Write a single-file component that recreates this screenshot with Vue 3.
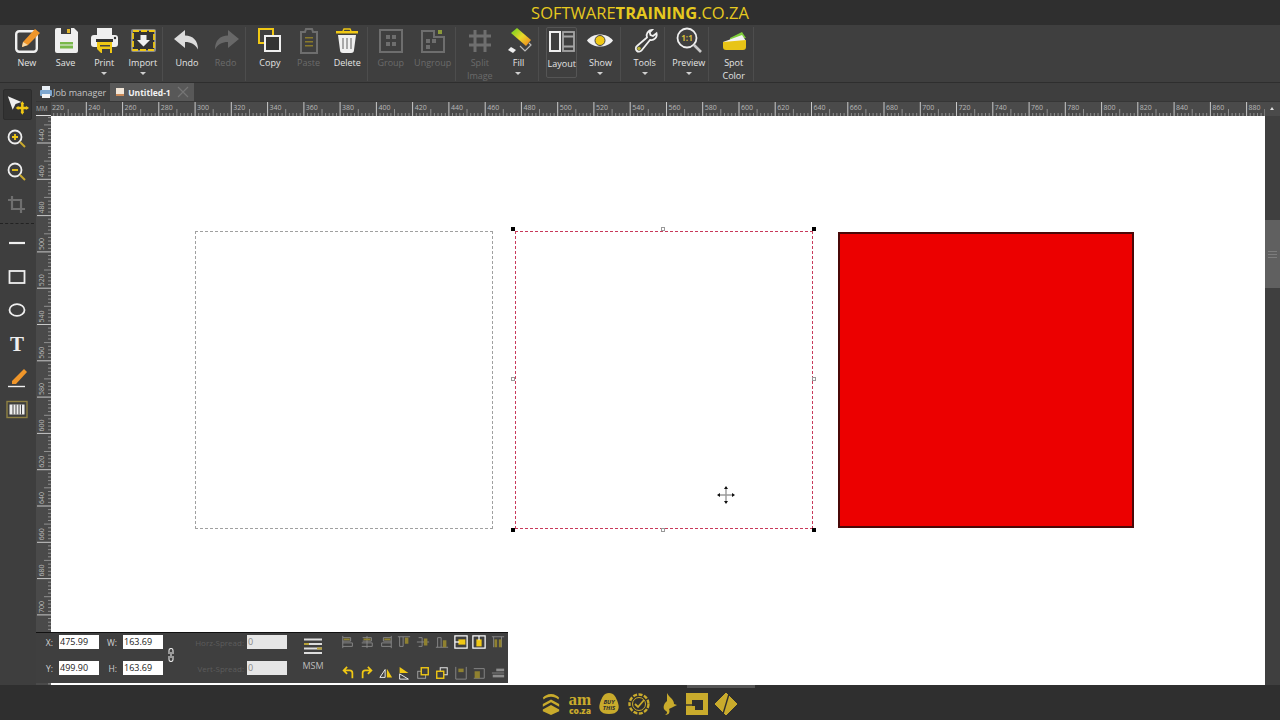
<script setup>
import { computed } from 'vue'

const Y = '#f0c814'
const W = '#efefef'
const D = '#6e6e6e'

const icons = {
  new: `<rect x="5.200" y="4.200" width="20.600" height="20.600" rx="3" fill="none" stroke="${W}" stroke-width="2.400"/><path d="M11 20l1-5L24 2l5 4-12 12z" fill="#f0962a"/><path d="M11 20l1-5 5 3z" fill="#f7d9a8"/>`,
  save: `<path d="M5 3a2 2 0 0 1 2-2h17l4 4v19a2 2 0 0 1-2 2H7a2 2 0 0 1-2-2z" fill="${W}"/><rect x="11" y="1" width="10" height="6" fill="#3d3d3d"/><rect x="17" y="2" width="3" height="4" fill="#e0b52a"/><rect x="10" y="15" width="13" height="2.500" fill="#79b84a"/><rect x="10" y="18.500" width="13" height="3" fill="#79b84a"/>`,
  print: `<rect x="9" y="1" width="15" height="7" fill="${W}"/><rect x="3" y="8" width="27" height="12" rx="3" fill="${W}"/><circle cx="27" cy="11" r="1.200" fill="#333"/><rect x="8" y="12" width="17" height="3" fill="#333"/><path d="M9 15h15v11H13l-4-4z" fill="${Y}"/><rect x="12" y="18" width="10" height="1.500" fill="#444"/><rect x="14" y="22" width="8" height="4" fill="#3d3d3d"/>`,
  import: `<rect x="4" y="2" width="25" height="23" rx="2" fill="#8b8b8b"/><rect x="6" y="4" width="21" height="19" fill="#333" stroke="${Y}" stroke-width="1.800" stroke-dasharray="6 2"/><path d="M13.500 8h6v5h3.500l-6.500 6.500L10 13h3.500z" fill="${W}"/>`,
  undo: `<path d="M3 12L14 3v5.500c8 0 13 5 13 14-3-5.500-7-7.500-13-7.500V21z" fill="#dcdcdc"/>`,
  redo: `<path d="M29 12L18 3v5.500c-8 0-13 5-13 14 3-5.500 7-7.500 13-7.500V21z" fill="#686868"/>`,
  copy: `<rect x="5" y="2" width="14" height="14" fill="none" stroke="${Y}" stroke-width="2"/><rect x="11" y="9" width="15" height="15" fill="#333" stroke="${W}" stroke-width="2"/>`,
  paste: `<path d="M8 5h4l1-3h6l1 3h4v21H8z" fill="none" stroke="${D}" stroke-width="2"/><rect x="12" y="10" width="8" height="1.500" fill="#8a7a2a"/><rect x="12" y="14" width="8" height="1.500" fill="#8a7a2a"/><rect x="12" y="18" width="8" height="1.500" fill="#8a7a2a"/>`,
  delete: `<rect x="5" y="4" width="22" height="2.500" fill="${Y}"/><path d="M12 4l1-2h6l1 2" fill="none" stroke="${Y}" stroke-width="1.500"/><path d="M7 8h18l-2 15a3 3 0 0 1-3 3h-8a3 3 0 0 1-3-3z" fill="${W}"/><path d="M12 11v11M16 11v11M20 11v11" stroke="#777" stroke-width="1.200"/>`,
  group: `<rect x="5" y="3" width="22" height="22" fill="none" stroke="${D}" stroke-width="2"/><rect x="11" y="8" width="4" height="4" fill="${D}"/><rect x="17" y="8" width="4" height="4" fill="${D}"/><rect x="11" y="15" width="4" height="4" fill="${D}"/><rect x="17" y="15" width="4" height="4" fill="${D}"/>`,
  ungroup: `<path d="M5 4h12v6h10v15H5z" fill="none" stroke="${D}" stroke-width="2"/><rect x="9" y="12" width="4" height="4" fill="${D}"/><rect x="15" y="12" width="4" height="4" fill="${D}"/><rect x="9" y="18" width="4" height="4" fill="${D}"/><rect x="21" y="3" width="4" height="4" fill="#8c9a3a"/>`,
  split: `<path d="M11 3v22M21 3v22M5 9h22M5 18h22" stroke="${D}" stroke-width="3"/>`,
  fill: `<defs><linearGradient id="rg" x1="0" y1="0" x2="1" y2="1"><stop offset=".1" stop-color="#7ed321"/><stop offset=".5" stop-color="#e8d82a"/><stop offset="1" stop-color="#f0801e"/></linearGradient></defs><path d="M9 6l6-5 14 12-5 6z" fill="url(#rg)"/><path d="M27 16l2 2-6 6-5-5" fill="none" stroke="#bbb" stroke-width="1.200"/><path d="M9 20l5 3-3 3-5-3z" fill="${W}"/>`,
  layout: `<rect x="4" y="4" width="10" height="19" fill="none" stroke="${W}" stroke-width="2"/><rect x="17" y="4" width="11" height="19" fill="none" stroke="#a5a5a5" stroke-width="1.800"/><path d="M17 8.500h11M17 18.500h11" stroke="#a5a5a5" stroke-width="1.800"/>`,
  show: `<path d="M3 13.500C9 5.500 23 5.500 29 13.500 23 21.500 9 21.500 3 13.500z" fill="${W}"/><circle cx="16" cy="13.500" r="5" fill="${Y}" stroke="#444"/>`,
  tools: `<path d="M23 3a5.500 5.500 0 0 0-5 7.500L8 19a3.200 3.200 0 1 0 4.500 4.500L21 13a5.500 5.500 0 0 0 6.500-6.800l-3.500 2.800-2.500-1-.8-2.500z" fill="none" stroke="${W}" stroke-width="1.800"/><circle cx="10" cy="21.500" r="1.800" fill="#b9b23a"/>`,
  preview: `<circle cx="14" cy="11" r="9.500" fill="none" stroke="${W}" stroke-width="1.800"/><path d="M21 18l7 7" stroke="#c9c9c9" stroke-width="2.600"/><text x="14" y="14" font-size="8" font-weight="700" text-anchor="middle" font-family="Open Sans, sans-serif" fill="#d8be3a">1:1</text>`,
  spot: `<path d="M12 11l12-6 4 6-16 2z" fill="#7ecf3a"/><path d="M5 15L24 8l4 6-23 2z" fill="#f2f2f2"/><path d="M5 15l23-2v7a3 3 0 0 1-3 3H8a3 3 0 0 1-3-3z" fill="#e8c417"/>`
}

const groups = [
  { pad: 0, tools: [
    { label: 'New', icon: 'new' }, { label: 'Save', icon: 'save' },
    { label: 'Print', icon: 'print', menu: true }, { label: 'Import', icon: 'import', menu: true }] },
  { pad: 4.3, tools: [{ label: 'Undo', icon: 'undo' }, { label: 'Redo', icon: 'redo', off: true }] },
  { pad: 4.6, tools: [
    { label: 'Copy', icon: 'copy' }, { label: 'Paste', icon: 'paste', off: true }, { label: 'Delete', icon: 'delete' }] },
  { pad: 3.9, tools: [{ label: 'Group', icon: 'group', off: true }, { label: 'Ungroup', icon: 'ungroup', off: true, wide: true }] },
  { pad: 4.3, tools: [{ label: 'Split', second: 'Image', icon: 'split', off: true }, { label: 'Fill', icon: 'fill', menu: true }] },
  { pad: 3.6, tools: [{ label: 'Layout', icon: 'layout', on: true }, { label: 'Show', icon: 'show', menu: true }] },
  { pad: 4.6, tools: [{ label: 'Tools', icon: 'tools', menu: true }] },
  { pad: 4.3, tools: [{ label: 'Preview', icon: 'preview', menu: true }] },
  { pad: 5.3, tools: [{ label: 'Spot', second: 'Color', icon: 'spot' }] }
]

const sideTools = [
  { svg: `<circle cx="10" cy="11" r="6.500" fill="none" stroke="${W}" stroke-width="1.800"/><path d="M7 11h6M10 8v6" stroke="${Y}" stroke-width="1.800"/><path d="M15 16l5 5" stroke="#c9a92e" stroke-width="2"/>` },
  { svg: `<circle cx="10" cy="11" r="6.500" fill="none" stroke="${W}" stroke-width="1.800"/><path d="M7 11h6" stroke="${Y}" stroke-width="1.800"/><path d="M15 16l5 5" stroke="#c9a92e" stroke-width="2"/>` },
  { svg: `<path d="M7 4v13h13M3 8h13v13" fill="none" stroke="#6f6f6f" stroke-width="2.200"/>`, sepAfter: true },
  { svg: `<path d="M4 12h16" stroke="${W}" stroke-width="2.200"/>` },
  { svg: `<rect x="4.500" y="6" width="15" height="12" fill="none" stroke="${W}" stroke-width="1.800"/>` },
  { svg: `<ellipse cx="12" cy="12" rx="7.500" ry="5.800" fill="none" stroke="${W}" stroke-width="1.800"/>` },
  { svg: `<text x="12" y="19" font-size="21" font-weight="700" text-anchor="middle" font-family="Liberation Serif, serif" fill="${W}">T</text>` },
  { svg: `<path d="M7 16L19 4l3 3L11 19H7z" fill="#f0962a"/><path d="M3 21.500h17" stroke="${W}" stroke-width="1.400"/>` },
  { svg: `<rect x="2" y="3.500" width="20" height="16" fill="none" stroke="#8f8143" stroke-width="1.400"/><rect x="4.500" y="6.500" width="15" height="10" fill="${W}"/><path d="M8 6.500v10M11 6.500v10M14 6.500v10M16.500 6.500v10" stroke="#444" stroke-width="1"/>` }
]

const hPos = v => 86.3 + ((v - 240) / 20) * 36.26 - 51
const vPos = v => 27 + ((v - 440) / 20) * 36.3 // y inside the ruler, which starts at y=116

const hLabels = computed(() => {
  const list = []
  for (let v = 220; v <= 880; v += 20) list.push({ v, x: hPos(v) })
  return list
})
const vLabels = computed(() => {
  const list = []
  for (let v = 440; v <= 700; v += 20) list.push({ v, y: vPos(v) })
  return list
})

function ticks(horizontal, major) {
  let d = ''
  for (let v = 200; v <= 900; v += 2) {
    const isMajor = v % 20 === 0
    if (isMajor !== major) continue
    const size = isMajor ? 14 : v % 10 === 0 ? 7 : 3
    if (horizontal) {
      d += `M${hPos(v).toFixed(1)} 14v-${size}`
    } else {
      d += `M15 ${vPos(v).toFixed(1)}h-${size}`
    }
  }
  return d
}
const hMajor = computed(() => ticks(true, true))
const hMinor = computed(() => ticks(true, false))
const vMajor = computed(() => ticks(false, true))
const vMinor = computed(() => ticks(false, false))

const handles = [
  { cls: 'solid', x: -5, y: -5 }, { cls: 'solid', x: 296, y: -5 }, { cls: 'solid', x: -5, y: 296 }, { cls: 'solid', x: 296, y: 296 },
  { cls: 'hollow', x: 145, y: -5 }, { cls: 'hollow', x: -5, y: 145 }, { cls: 'hollow', x: 296, y: 145 }, { cls: 'hollow', x: 145, y: 296 }
]

const A = '#8d8d8d'
const B = '#8f8130'
const alignTop = [
  `<path d="M2 1v14M2 3h9v4H2M2 9h11v4H2" fill="none" stroke="${A}"/><rect x="3" y="4" width="7" height="2" fill="${B}"/>`,
  `<path d="M8 1v14M3 3h10v4H3M2 9h12v4H2" fill="none" stroke="${A}"/><rect x="4" y="4" width="8" height="2" fill="${B}"/>`,
  `<path d="M14 1v14M14 3H5v4h9M14 9H3v4h11" fill="none" stroke="${A}"/><rect x="6" y="4" width="7" height="2" fill="${B}"/>`,
  `<path d="M1 2h14M3 2v11h4V2" fill="none" stroke="${A}"/><rect x="9" y="3" width="4" height="7" fill="${B}"/>`,
  `<path d="M1 8h14M3 3h4v10H3" fill="none" stroke="${A}"/><rect x="9" y="4" width="4" height="8" fill="${B}"/>`,
  `<path d="M1 14h14M3 14V3h4v11" fill="none" stroke="${A}"/><rect x="9" y="6" width="4" height="8" fill="${B}"/>`,
  `<rect x="1" y="1" width="14" height="14" fill="none" stroke="#fff" stroke-width="1.400"/><rect x="5" y="5" width="8" height="6" fill="${Y}"/><path d="M1 8h5" stroke="#fff" stroke-width="1.400"/>`,
  `<rect x="1" y="1" width="14" height="14" fill="none" stroke="#fff" stroke-width="1.400"/><rect x="5" y="5" width="6" height="8" fill="${Y}"/><path d="M8 1v5" stroke="#fff" stroke-width="1.400"/>`,
  `<path d="M3 2v12M12 2v12M1 2h14" fill="none" stroke="${A}"/><rect x="4" y="5" width="3" height="9" fill="${B}"/><rect x="9" y="5" width="3" height="9" fill="${B}"/>`
]
const alignBottom = [
  `<path d="M13 14V8a3 3 0 0 0-3-3H4M7 1L3 5l4 4" fill="none" stroke="${Y}" stroke-width="2"/>`,
  `<path d="M3 14V8a3 3 0 0 1 3-3h6M9 1l4 4-4 4" fill="none" stroke="${Y}" stroke-width="2"/>`,
  `<path d="M7 4v9H1z" fill="none" stroke="#fff"/><path d="M9 3v10h6z" fill="${Y}"/>`,
  `<path d="M3 1v7h10z" fill="${Y}"/><path d="M3 9v6h10z" fill="none" stroke="#fff"/>`,
  `<rect x="2" y="6" width="9" height="8" fill="none" stroke="#aaa"/><rect x="6" y="2" width="8" height="8" fill="#3f3f3f" stroke="${Y}" stroke-width="1.600"/>`,
  `<rect x="6" y="2" width="8" height="8" fill="none" stroke="#ddd" stroke-width="1.200"/><rect x="2" y="6" width="8" height="8" fill="#3f3f3f" stroke="${Y}" stroke-width="1.600"/>`,
  `<path d="M2 1v14h12V1" fill="none" stroke="${A}"/><rect x="5" y="3" width="6" height="4" fill="${B}"/>`,
  `<path d="M2 3h12v11H2" fill="none" stroke="${A}"/><rect x="3" y="6" width="6" height="8" fill="${B}"/>`,
  `<path d="M1 8h14" stroke="${A}"/><rect x="6" y="3" width="9" height="3" fill="${A}"/><rect x="2" y="10" width="13" height="3" fill="${A}"/>`
]
</script>

<template>
  <div class="app">
    <header class="title">
      <span>SOFTWARE</span><b>TRAINING</b><span>.CO.ZA</span>
    </header>

    <nav class="toolbar">
      <div v-for="(group, i) in groups" :key="i" class="group" :style="{ paddingLeft: group.pad + 'px' }">
        <div
          v-for="tool in group.tools"
          :key="tool.label"
          class="tool"
          :class="{ off: tool.off, on: tool.on, wide: tool.wide }"
        >
          <svg class="tool-icon" viewBox="0 0 32 28" width="32" height="28" v-html="icons[tool.icon]"></svg>
          <span class="tool-label">{{ tool.label }}</span>
          <span v-if="tool.second" class="tool-label">{{ tool.second }}</span>
          <span v-if="tool.menu" class="chevron"></span>
        </div>
      </div>
    </nav>

    <div class="workspace">
      <aside class="side">
        <div class="side-tool active">
          <svg viewBox="0 0 28 30" width="28" height="30">
            <path d="M4 6l14 6-6 2-3 6z" fill="#efefef" />
            <path d="M19 13v10M14 18h10" stroke="#f0c814" stroke-width="2.600" />
            <path d="M19 11l-2 3h4zM19 25l-2-3h4zM12 18l3-2v4zM26 18l-3-2v4z" fill="#f0c814" />
          </svg>
        </div>
        <template v-for="(tool, i) in sideTools" :key="i">
          <div class="side-tool">
            <svg viewBox="0 0 24 24" width="24" height="24" v-html="tool.svg"></svg>
          </div>
          <div v-if="tool.sepAfter" class="side-sep"></div>
        </template>
      </aside>

      <div class="document">
        <div class="tabs">
          <div class="tab">
            <svg viewBox="0 0 14 14" width="14" height="14">
              <rect x="3" y="1" width="8" height="4" fill="#e8eef5" />
              <rect x="1" y="5" width="12" height="6" rx="1" fill="#7fa8d0" />
              <rect x="3" y="9" width="8" height="4" fill="#f4f4f4" />
            </svg>
            <span>Job manager</span>
          </div>
          <div class="tab current">
            <svg viewBox="0 0 10 10" width="10" height="10">
              <rect x="1" y="1" width="8" height="8" fill="#f2e6d8" />
              <rect x="1" y="7" width="8" height="2" fill="#c98a5a" />
            </svg>
            <b>Untitled-1</b>
            <svg class="close" viewBox="0 0 12 12" width="12" height="12">
              <path d="M1 1l10 10M11 1L1 11" stroke="#757575" stroke-width="1.200" />
            </svg>
          </div>
        </div>

        <div class="h-ruler-row">
          <div class="corner">MM</div>
          <svg class="h-ruler" width="1214" height="14" viewBox="0 0 1214 14">
            <path :d="hMinor" stroke="#8f8f8f" stroke-width="1" fill="none" />
            <path :d="hMajor" stroke="#c8c8c8" stroke-width="1" fill="none" />
            <text v-for="l in hLabels" :key="l.v" :x="l.x + 2" y="8" class="ruler-text">{{ l.v }}</text>
          </svg>
          <div class="scroll-up"></div>
        </div>

        <div class="canvas-row">
          <svg class="v-ruler" width="15" height="569" viewBox="0 0 15 569">
            <path :d="vMinor" stroke="#8f8f8f" stroke-width="1" fill="none" />
            <path :d="vMajor" stroke="#c8c8c8" stroke-width="1" fill="none" />
            <text
              v-for="l in vLabels"
              :key="l.v"
              class="ruler-text"
              :transform="`translate(8 ${l.y - 2}) rotate(-90)`"
            >{{ l.v }}</text>
          </svg>

          <main class="canvas">
            <div class="shape plain"></div>
            <div class="shape selected">
              <i v-for="(h, i) in handles" :key="i" class="handle" :class="h.cls" :style="{ left: h.x + 'px', top: h.y + 'px' }"></i>
            </div>
            <div class="shape red"></div>
            <svg class="cursor" viewBox="0 0 20 20" width="20" height="20">
              <path d="M10 2v16M2 10h16" stroke="#9a9a9a" stroke-width="1.400" />
              <path d="M10 1l-2 3h4zM10 19l-2-3h4zM1 10l3-2v4zM19 10l-3-2v4z" fill="#111" />
            </svg>
          </main>

          <div class="scrollbar">
            <div class="thumb"><i></i><i></i><i></i></div>
          </div>
        </div>
      </div>

      <section class="props">
        <div class="fields">
          <label class="key">X:</label><span class="val">475.99</span>
          <label class="key">W:</label><span class="val">163.69</span>
          <label class="key">Y:</label><span class="val">499.90</span>
          <label class="key">H:</label><span class="val">163.69</span>
        </div>
        <svg class="link" viewBox="0 0 8 14" width="8" height="14">
          <path d="M2 6V2.500a2 2 0 0 1 4 0V6M2 8v3.500a2 2 0 0 0 4 0V8M4 4v6" fill="none" stroke="#e8e8e8" stroke-width="1.100" />
        </svg>
        <div class="spread">
          <label class="key dim">Horz-Spread:</label><span class="val gray">0</span>
          <label class="key dim">Vert-Spread:</label><span class="val gray">0</span>
        </div>
        <div class="msm">
          <svg viewBox="0 0 18 16" width="18" height="16">
            <path d="M0 1.500h18M0 6h18M0 10.500h18M0 15h18" stroke="#ddd" stroke-width="1.800" />
            <path d="M0 6h5M13 10.500h5" stroke="#b8a23a" stroke-width="1.800" />
          </svg>
          <span>MSM</span>
        </div>
        <div class="align">
          <svg v-for="(svg, i) in alignTop" :key="'t' + i" viewBox="0 0 16 16" width="14" height="14" v-html="svg"></svg>
          <svg v-for="(svg, i) in alignBottom" :key="'b' + i" viewBox="0 0 16 16" width="14" height="14" v-html="svg"></svg>
        </div>
      </section>
    </div>

    <footer class="footer">
      <div class="h-thumb"></div>
      <div class="logos">
        <svg viewBox="0 0 22 24" width="20" height="24">
          <path d="M11 1c4 0 7 2 9 4l-1 2c-2-2-5-3-8-3S5 5 3 7L2 5c2-2 5-4 9-4zM11 7l9 5v3l-9-5-9 5v-3zM11 13l9 5v2l-9 4-9-4v-2z" fill="#c9ab2c" />
        </svg>
        <div class="am"><b>am</b><b>co.za</b></div>
        <svg viewBox="0 0 24 24" width="24" height="24">
          <path d="M12 1c5 0 7 4 9 10 2 6 0 11-9 11S1 17 3 11C5 5 7 1 12 1z" fill="#c9ab2c" />
          <text x="12" y="12" class="buy">BUY</text>
          <text x="12" y="18" class="buy">THIS</text>
        </svg>
        <svg viewBox="0 0 24 24" width="24" height="24">
          <circle cx="12" cy="12" r="9.500" fill="none" stroke="#c9ab2c" stroke-width="2.400" stroke-dasharray="4 1.500" />
          <circle cx="12" cy="12" r="6.500" fill="none" stroke="#c9ab2c" stroke-width="1" />
          <path d="M8 12l3 3 6-7" fill="none" stroke="#c9ab2c" stroke-width="1.800" />
        </svg>
        <svg viewBox="0 0 24 24" width="24" height="24">
          <path d="M11 1c1 2 2 3 4 5 2 2 3 4 3 6l3 1-4 2c-1 1-3 1-4 2 1 2 1 6-4 6 2-1 3-3 1-4-2-1-3-3-2-6l1-2 2-2z" fill="#c9ab2c" />
        </svg>
        <svg viewBox="0 0 24 24" width="24" height="24">
          <rect x="1" y="1" width="22" height="22" fill="#c9ab2c" />
          <rect x="7" y="8" width="11" height="10" fill="#2f2f2f" />
          <rect x="1" y="14" width="9" height="9" fill="#c9ab2c" />
          <path d="M1 13h6" stroke="#2f2f2f" stroke-width="1.400" />
        </svg>
        <svg viewBox="0 0 24 24" width="24" height="24">
          <path d="M12 1l11 11-11 11L1 12z" fill="#c9ab2c" stroke="#c9ab2c" stroke-linejoin="round" />
          <path d="M15 2L9 22" stroke="#2f2f2f" stroke-width="1.400" />
        </svg>
      </div>
    </footer>
  </div>
</template>

<style>
html, body {
  margin: 0;
  background: #2f2f2f;
}
</style>

<style scoped>
.app {
  position: relative;
  width: 1280px;
  height: 720px;
  display: flex;
  flex-direction: column;
  overflow: hidden;
  background: #3e3e3e;
  font-family: "Open Sans", "Noto Sans", sans-serif;
}

.title {
  height: 25px;
  flex: none;
  background: #2f2f2f;
  color: #e6c91f;
  font-size: 16.5px;
  line-height: 25px;
  text-align: center;
}
.title b {
  font-weight: 700;
}

.toolbar {
  height: 57px;
  flex: none;
  display: flex;
  padding-left: 7.5px;
  background: #3f3f3f;
  border-bottom: 1px solid #2e2e2e;
}
.group {
  display: flex;
  border-right: 1px solid #4d4d4d;
  margin: 2px 0 1px;
}
.tool {
  position: relative;
  width: 38.7px;
  display: flex;
  flex-direction: column;
  align-items: center;
  font-size: 9px;
  color: #e4e4e4;
}
.tool.wide {
  width: 45px;
}
.tool.off {
  color: #6b6b6b;
}
.tool.on {
  box-sizing: border-box;
  height: 51px;
  border: 1px solid #555;
  border-radius: 2px;
  margin: 0 3.85px;
  width: 31px;
}
.tool-icon {
  flex: none;
}
.tool-label {
  line-height: 13px;
  margin-top: 1px;
  white-space: nowrap;
}
.tool-label + .tool-label {
  margin-top: 0;
}
.chevron {
  width: 0;
  height: 0;
  margin-top: 3px;
  border-left: 3.5px solid transparent;
  border-right: 3.5px solid transparent;
  border-top: 3.5px solid #cfcfcf;
}

.workspace {
  position: relative;
  flex: 1;
  display: flex;
  min-height: 0;
}

.side {
  width: 36px;
  flex: none;
  display: flex;
  flex-direction: column;
  align-items: center;
  padding: 6px 2px 0 0;
  box-sizing: border-box;
}
.side-tool {
  height: 33.4px;
  flex: none;
  display: flex;
  align-items: center;
  justify-content: center;
}
.side-tool.active {
  width: 29px;
  height: 31px;
  border: 1px solid #2c2c2c;
  border-radius: 2px;
  background: #333;
  box-sizing: border-box;
  margin-bottom: 1px;
}
.side-sep {
  width: 34px;
  border-top: 1px dashed #222;
  margin: 2px 0 2.5px;
}

.document {
  flex: 1;
  min-width: 0;
  display: flex;
  flex-direction: column;
}

.tabs {
  height: 18px;
  flex: none;
  display: flex;
  align-items: center;
  padding-left: 3px;
  font-size: 9px;
  color: #c4c4c4;
  gap: 4px;
  white-space: nowrap;
}
.tab {
  height: 18px;
  display: flex;
  align-items: center;
}
.tab.current {
  width: 84px;
  box-sizing: border-box;
  padding-left: 5px;
  background: #585858;
  color: #f2f2f2;
}
.tab.current b {
  margin-left: 3px;
  font-size: 8.5px;
}
.tab .close {
  margin-left: 6px;
}

.h-ruler-row {
  height: 15px;
  flex: none;
  display: flex;
  background: #4a4a4a;
  border-top: 1px solid #363636;
  box-sizing: border-box;
}
.corner {
  width: 15px;
  flex: none;
  font-size: 6.5px;
  line-height: 13px;
  color: #aaa;
  background: #3e3e3e;
  overflow: hidden;
  border-bottom: 1px solid #ddd;
  box-sizing: border-box;
}
.h-ruler {
  flex: none;
}
.scroll-up {
  width: 0;
  height: 0;
  margin: 5px 0 0 5px;
  border-left: 2px solid transparent;
  border-right: 2px solid transparent;
  border-bottom: 3px solid #ddd;
}
.ruler-text {
  font-size: 7px;
  fill: #b8b8b8;
  font-family: "Open Sans", sans-serif;
}

.canvas-row {
  flex: 1;
  min-height: 0;
  display: flex;
}
.v-ruler {
  flex: none;
  background: #4a4a4a;
}
.canvas {
  position: relative;
  flex: 1;
  background: #fff;
}
.shape {
  position: absolute;
  top: 115px;
  width: 298px;
  height: 298px;
  box-sizing: border-box;
}
.shape.plain {
  left: 144px;
  border: 1px dashed #a0a0a0;
}
.shape.selected {
  left: 464px;
  border: 1px dashed #c8395a;
}
.shape.red {
  left: 787px;
  top: 116px;
  width: 296px;
  height: 296px;
  background: #ec0000;
  border: 2px solid #4a0808;
}
.handle {
  position: absolute;
  width: 4px;
  height: 4px;
  box-sizing: border-box;
}
.handle.solid {
  background: #000;
}
.handle.hollow {
  border: 1px solid #999;
  background: #fff;
}
.cursor {
  position: absolute;
  left: 665px;
  top: 369px;
}

.scrollbar {
  width: 15px;
  flex: none;
  background: #3f3f3f;
}
.thumb {
  margin-top: 104px;
  height: 68px;
  background: #606060;
  display: flex;
  flex-direction: column;
  align-items: center;
  justify-content: center;
  gap: 2px;
}
.thumb i {
  width: 9px;
  height: 1px;
  background: #7d7d7d;
}

.props {
  position: absolute;
  left: 36px;
  top: 549px;
  width: 472px;
  height: 51px;
  display: flex;
  box-sizing: border-box;
  background: #3f3f3f;
  border-top: 1px solid #111;
  color: #d8d8d8;
  font-size: 9px;
}
.fields,
.spread {
  display: grid;
  align-items: center;
  row-gap: 12px;
  padding-top: 2px;
  grid-template-rows: 14px 14px;
}
.fields {
  grid-template-columns: 23px 40px 24px 40px;
}
.spread {
  margin-left: 15px;
  grid-template-columns: 57px 40px;
}
.key {
  text-align: right;
  padding-right: 6px;
  font-size: 8.5px;
  color: #d2d2d2;
}
.key.dim {
  color: #5c5c5c;
  font-size: 8px;
  padding-right: 3px;
}
.val {
  height: 14px;
  line-height: 14px;
  padding-left: 1px;
  background: #fff;
  color: #222;
  font-size: 9px;
}
.val.gray {
  background: #e6e6e6;
  color: #888;
}
.link {
  align-self: center;
  margin-left: 4px;
  margin-top: -6px;
}
.msm {
  width: 50px;
  margin-left: 1px;
  display: flex;
  flex-direction: column;
  align-items: center;
  padding-top: 5px;
  gap: 5px;
  color: #bdbdbd;
  font-size: 9px;
}
.align {
  margin-left: 3px;
  display: grid;
  grid-template-columns: repeat(9, 14px);
  column-gap: 4.75px;
  row-gap: 16.7px;
  padding-top: 2px;
  align-content: start;
}

.footer {
  height: 35px;
  flex: none;
  background: #2f2f2f;
}
.h-thumb {
  width: 68px;
  height: 3px;
  margin-left: 687px;
  background: #555;
}
.logos {
  display: grid;
  grid-template-columns: repeat(7, 29.3px);
  justify-items: center;
  align-items: center;
  padding-left: 536px;
  height: 32px;
}
.am {
  display: flex;
  flex-direction: column;
  align-items: center;
  width: 28px;
  color: #c9ab2c;
  font-family: "Liberation Serif", serif;
}
.am b {
  font-size: 17px;
  line-height: 13px;
}
.am b + b {
  font-size: 8.5px;
  line-height: 9px;
  font-family: "Open Sans", sans-serif;
  font-weight: 800;
}
.buy {
  font-size: 6px;
  font-style: italic;
  font-weight: 700;
  text-anchor: middle;
  fill: #2f2f2f;
  font-family: "Open Sans", sans-serif;
}
</style>
